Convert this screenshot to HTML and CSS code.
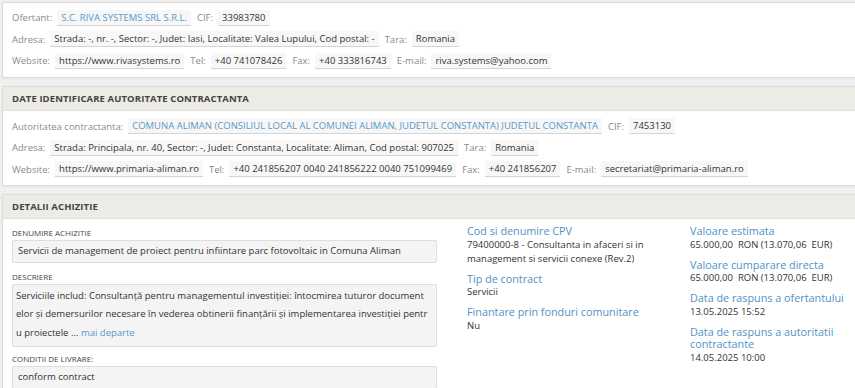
FILE: index.html
```html
<!DOCTYPE html>
<html lang="ro">

<head>
    <meta charset="UTF-8">
    <meta name="viewport" content="width=device-width, initial-scale=1.0">
    <title>Detalii achizitie</title>
    <link rel="stylesheet" href="styles.css">
</head>

<body>

    <div class="panel panel-first">
        <div class="panel-body">
            <div class="info-row">
                <span class="lbl">Ofertant:</span>
                <span class="val link">S.C. RIVA SYSTEMS SRL S.R.L.</span>
                <span class="lbl">CIF:</span>
                <span class="val">33983780</span>
            </div>
            <div class="info-row">
                <span class="lbl">Adresa:</span>
                <span class="val">Strada: -, nr. -, Sector: -, Judet: Iasi, Localitate: Valea Lupului, Cod postal: -</span>
                <span class="lbl">Tara:</span>
                <span class="val">Romania</span>
            </div>
            <div class="info-row">
                <span class="lbl">Website:</span>
                <span class="val">https://www.rivasystems.ro</span>
                <span class="lbl">Tel:</span>
                <span class="val">+40 741078426</span>
                <span class="lbl">Fax:</span>
                <span class="val">+40 333816743</span>
                <span class="lbl">E-mail:</span>
                <span class="val">riva.systems@yahoo.com</span>
            </div>
        </div>
    </div>

    <div class="panel">
        <div class="panel-heading">DATE IDENTIFICARE AUTORITATE CONTRACTANTA</div>
        <div class="panel-body">
            <div class="info-row">
                <span class="lbl">Autoritatea contractanta:</span>
                <span class="val link">COMUNA ALIMAN (CONSILIUL LOCAL AL COMUNEI ALIMAN, JUDETUL CONSTANTA) JUDETUL CONSTANTA</span>
                <span class="lbl">CIF:</span>
                <span class="val">7453130</span>
            </div>
            <div class="info-row">
                <span class="lbl">Adresa:</span>
                <span class="val">Strada: Principala, nr. 40, Sector: -, Judet: Constanta, Localitate: Aliman, Cod postal: 907025</span>
                <span class="lbl">Tara:</span>
                <span class="val">Romania</span>
            </div>
            <div class="info-row">
                <span class="lbl">Website:</span>
                <span class="val">https://www.primaria-aliman.ro</span>
                <span class="lbl">Tel:</span>
                <span class="val">+40 241856207 0040 241856222 0040 751099469</span>
                <span class="lbl">Fax:</span>
                <span class="val">+40 241856207</span>
                <span class="lbl">E-mail:</span>
                <span class="val">secretariat@primaria-aliman.ro</span>
            </div>
        </div>
    </div>

    <div class="panel">
        <div class="panel-heading">DETALII ACHIZITIE</div>
        <div class="panel-body details">
            <div class="col-main">
                <div class="field-title">DENUMIRE ACHIZITIE</div>
                <div class="field-box">Servicii de management de proiect pentru infiintare parc fotovoltaic in Comuna Aliman</div>

                <div class="field-title">DESCRIERE</div>
                <div class="field-box desc">Serviciile includ: Consultanță pentru managementul investiției: întocmirea tuturor documentelor și demersurilor necesare în vederea obtinerii finanțării și implementarea investiției pentru proiectele ... <a href="#" class="more">mai departe</a></div>

                <div class="field-title">CONDITII DE LIVRARE:</div>
                <div class="field-box">conform contract</div>
            </div>

            <div class="col-side">
                <div class="item">
                    <div class="item-title">Cod si denumire CPV</div>
                    <div class="item-val">79400000-8 - Consultanta in afaceri si in management si servicii conexe (Rev.2)</div>
                </div>
                <div class="item">
                    <div class="item-title">Tip de contract</div>
                    <div class="item-val">Servicii</div>
                </div>
                <div class="item">
                    <div class="item-title">Finantare prin fonduri comunitare</div>
                    <div class="item-val">Nu</div>
                </div>
            </div>

            <div class="col-side col-last">
                <div class="item">
                    <div class="item-title">Valoare estimata</div>
                    <div class="item-val">65.000,00&nbsp; RON (13.070,06&nbsp; EUR)</div>
                </div>
                <div class="item">
                    <div class="item-title">Valoare cumparare directa</div>
                    <div class="item-val">65.000,00&nbsp; RON (13.070,06&nbsp; EUR)</div>
                </div>
                <div class="item">
                    <div class="item-title">Data de raspuns a ofertantului</div>
                    <div class="item-val">13.05.2025 15:52</div>
                </div>
                <div class="item">
                    <div class="item-title">Data de raspuns a autoritatii contractante</div>
                    <div class="item-val">14.05.2025 10:00</div>
                </div>
            </div>
        </div>
    </div>

</body>

</html>
```

FILE: styles.css
```css
* {
    margin: 0;
    padding: 0;
    box-sizing: border-box;
}

body {
    font-family: 'Open Sans', 'DejaVu Sans', sans-serif;
    background-color: #f0f0f0;
    color: #333;
    padding: 2px 0 0 2px;
    overflow: hidden;
}

.panel {
    background-color: white;
    border: 1px solid #dcdcdc;
    border-right: none;
    margin-bottom: 8px;
    box-shadow: 0 1px 2px rgba(0, 0, 0, 0.05);
}

.panel-heading {
    background-color: #ecebe5;
    color: #444;
    font-size: 9.5px;
    font-weight: 700;
    letter-spacing: 0.1px;
    height: 24px;
    line-height: 24px;
    padding-left: 9px;
    border-bottom: 1px solid #e2e1da;
}

.panel-body {
    padding: 5px 9px 5px;
}

.panel-first .panel-body {
    padding-top: 4px;
}

.info-row {
    display: flex;
    align-items: center;
    height: 21.5px;
    white-space: nowrap;
    font-size: 9.5px;
}

.lbl {
    color: #8a8a8a;
    margin-right: 5px;
}

.val {
    background-color: #f7f7f7;
    border-bottom: 1px solid #d4d4d4;
    padding: 1px 4px 0;
    line-height: 14px;
    margin-right: 6px;
    color: #333;
}

.val.link {
    color: #5a98c8;
}

/* detalii */
.details {
    display: flex;
    padding: 6px 2px 20px 9px;
}

.col-main {
    flex-shrink: 0;
    width: 425px;
    margin-right: 30px;
    padding-top: 3px;
}

.field-title {
    font-size: 8px;
    line-height: 10px;
    color: #444;
    margin-bottom: 2px;
}

.field-box {
    background-color: #f4f4f4;
    border: 1px solid #dedede;
    border-radius: 2px;
    font-size: 9.5px;
    line-height: 18.5px;
    padding: 1px 5px;
    margin-bottom: 9px;
    word-break: break-all;
}

.field-box.desc {
    padding: 2px 7.5px 4px 3px;
    margin-bottom: 7px;
}

.more {
    color: #5a98c8;
    text-decoration: none;
}

.col-side {
    flex-shrink: 0;
    width: 190px;
    margin-right: 33px;
}

.col-last {
    flex: 1;
    width: auto;
    margin-right: 0;
}

.item {
    margin-bottom: 7px;
}

.item-title {
    color: #4f92c6;
    font-size: 10.8px;
    line-height: 12.5px;
}

.item-val {
    color: #333;
    font-size: 9.5px;
    line-height: 14px;
}
```
